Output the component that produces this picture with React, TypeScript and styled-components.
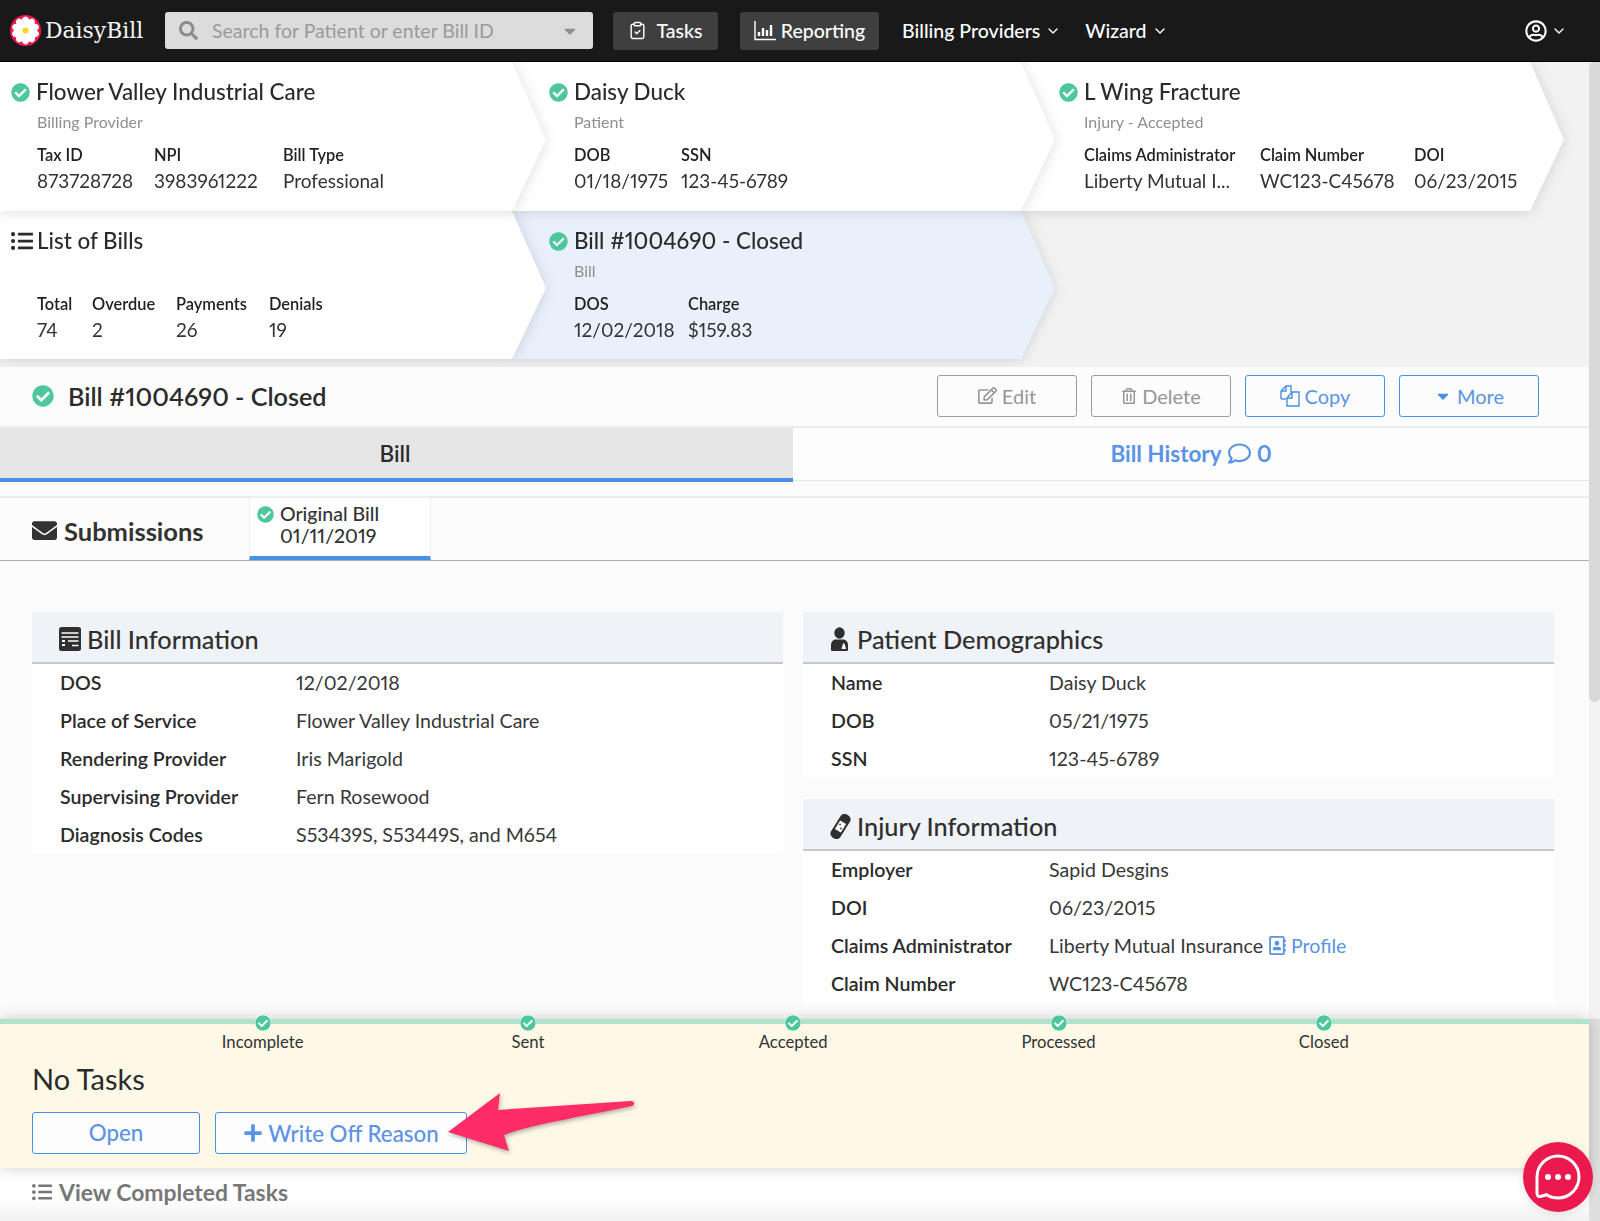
import React from "react";
import styled, { createGlobalStyle } from "styled-components";
import {
  FaCheckCircle, FaSearch, FaCaretDown, FaListUl, FaEnvelope, FaRegEdit, FaRegTrashAlt,
  FaRegComment, FaPlus, FaRegUserCircle, FaRegAddressBook,
} from "react-icons/fa";
import { ClipboardCheck, ChevronDown } from "lucide-react";

const FONT = `"Lato", "Open Sans", "Liberation Sans", sans-serif`;
const BLUE = "#4a90e2";
const LINK = "#5a93e6";
const INK = "#2b2b2b";
const GREEN = "#4fc79c";

const Global = createGlobalStyle`
  html, body { margin: 0; padding: 0; background: #fbfbfb; }
  body { font-family: ${FONT}; color: ${INK}; font-variant-numeric: proportional-nums; }
  * { box-sizing: border-box; }
`;

const Page = styled.div`
  position: relative;
  width: 1600px;
  height: 1221px;
  overflow: hidden;
  display: flex;
  flex-direction: column;
`;

/* ---------- top navigation ---------- */
const Nav = styled.nav`
  height: 62px;
  flex: none;
  display: flex;
  align-items: center;
  padding: 0 33px 0 10px;
  background: #191919;
  border-bottom: 1px solid #000;
`;
const LogoLink = styled.div`
  display: flex;
  align-items: center;
  gap: 4px;
  width: 155px;
  flex: none;
`;
const LogoText = styled.span`
  font-family: "DejaVu Serif", "Liberation Serif", serif;
  font-size: 21.9px;
  color: #f4f4f4;
`;
const SearchBox = styled.div`
  width: 428px;
  height: 37px;
  flex: none;
  display: flex;
  align-items: center;
  padding: 0 14px;
  background: #dcdcdc;
  border-radius: 3px;
  color: #8f8f8f;
  svg:first-child { font-size: 19px; color: #8c8c8c; }
`;
const SearchPlaceholder = styled.span`
  flex: 1;
  margin-left: 14px;
  font-size: 19.5px;
  color: #9a9a9a;
`;
const NavButton = styled.div<{ $w: number; $gap: number; $ml: number }>`
  width: ${(p) => p.$w}px;
  height: 38px;
  margin-left: ${(p) => p.$ml}px;
  flex: none;
  display: flex;
  align-items: center;
  justify-content: center;
  gap: ${(p) => p.$gap}px;
  background: #3f3f3f;
  border-radius: 3px;
  color: #fff;
  font-size: 19.5px;
  font-weight: 500;
`;
const NavLink = styled.div<{ $ml: number }>`
  margin-left: ${(p) => p.$ml}px;
  display: flex;
  align-items: center;
  gap: 5px;
  color: #fff;
  font-size: 19.5px;
  font-weight: 500;
`;
const UserMenu = styled.div`
  margin-left: auto;
  display: flex;
  align-items: center;
  gap: 4px;
  color: #fff;
  font-size: 22px;
`;

/* ---------- body / scrollbar ---------- */
const Body = styled.div`
  flex: 1;
  min-height: 0;
  display: flex;
`;
const Main = styled.div`
  width: 1589px;
  flex: none;
  display: flex;
  flex-direction: column;
`;
const ScrollTrack = styled.div`
  width: 11px;
  flex: none;
  display: flex;
  flex-direction: column;
  justify-content: space-between;
  background: #f3f3f3;
`;
const ScrollThumb = styled.div`
  height: 640px;
  background: #d9d9d9;
  border-radius: 5px 0 5px 5px;
`;
const ScrollFoot = styled.div`
  height: 202px;
  background: #dfdfdf;
`;

/* ---------- chevron breadcrumbs ---------- */
const Crumbs = styled.section`
  height: 305px;
  flex: none;
  overflow: hidden;
  background: #f2f2f2;
`;
const CrumbRow = styled.div<{ $z: number; $h: number }>`
  position: relative;
  z-index: ${(p) => p.$z};
  height: ${(p) => p.$h}px;
  display: flex;
`;
const CrumbShadow = styled.div<{ $z: number; $w: number; $first?: boolean }>`
  position: relative;
  z-index: ${(p) => p.$z};
  width: ${(p) => p.$w}px;
  flex: none;
  margin-left: ${(p) => (p.$first ? 0 : -33)}px;
  filter: drop-shadow(0 1px 7px rgba(0, 0, 0, 0.13));
`;
const CrumbBody = styled.div<{ $blue?: boolean; $pl: number }>`
  height: 100%;
  padding: 18px 0 0 ${(p) => p.$pl}px;
  background: ${(p) => (p.$blue ? "#e8f0fb" : "#fff")};
  clip-path: polygon(0 0, calc(100% - 34px) 0, 100% 52%, calc(100% - 34px) 100%, 0 100%);
`;
const CrumbTitle = styled.div<{ $indent: number }>`
  height: 24px;
  display: flex;
  align-items: center;
  gap: 6px;
  margin-left: ${(p) => p.$indent}px;
  font-size: 22.4px;
  font-weight: 500;
  line-height: 24px;
  color: ${INK};
  white-space: nowrap;
`;
const CheckMark = styled(FaCheckCircle)<{ $size: number }>`
  flex: none;
  width: ${(p) => p.$size}px;
  height: ${(p) => p.$size}px;
  color: ${GREEN};
`;
const ListMark = styled(FaListUl)`
  flex: none;
  width: 22px;
  height: 22px;
  margin-right: -2px;
`;
const CrumbSub = styled.div`
  height: 20px;
  margin-top: 8px;
  font-size: 16px;
  line-height: 20px;
  color: #8f8f8f;
`;
const MetaGrid = styled.div<{ $cols: string }>`
  display: grid;
  grid-template-columns: ${(p) => p.$cols};
  margin-top: 14px;
`;
const MetaLabel = styled.div`
  height: 18px;
  font-size: 16.4px;
  font-weight: 600;
  line-height: 18px;
  color: #222;
  white-space: nowrap;
`;
const MetaValue = styled.div`
  height: 22px;
  margin-top: 6px;
  font-size: 19px;
  line-height: 22px;
  color: #333;
  white-space: nowrap;
`;

/* ---------- bill heading ---------- */
const BillHead = styled.header`
  height: 59px;
  flex: none;
  display: flex;
  align-items: center;
  padding: 0 50px 2px 32px;
  background: #fcfcfc;
`;
const BillTitle = styled.h1`
  margin: 0 0 0 14px;
  flex: 1;
  font-size: 25.2px;
  font-weight: 600;
  color: ${INK};
`;
const ActionRow = styled.div`
  display: flex;
  gap: 14px;
`;
const ActionButton = styled.button<{ $muted?: boolean }>`
  width: 140px;
  height: 42px;
  display: flex;
  align-items: center;
  justify-content: center;
  gap: 5px;
  padding: 0;
  font-family: ${FONT};
  font-size: 20px;
  background: transparent;
  border: 1px solid ${(p) => (p.$muted ? "#9b9b9b" : BLUE)};
  border-radius: 3px;
  color: ${(p) => (p.$muted ? "#969696" : LINK)};
`;

/* ---------- tabs ---------- */
const TabBar = styled.div`
  height: 55px;
  flex: none;
  display: flex;
  border-top: 2px solid #ececec;
  border-bottom: 1px solid #e6e6e6;
  background: #fdfdfd;
`;
const ActiveTab = styled.div`
  width: 793px;
  flex: none;
  height: 54px;
  display: flex;
  align-items: center;
  justify-content: center;
  padding-right: 3px;
  font-size: 22.5px;
  font-weight: 600;
  color: ${INK};
  background: #e6e6e6;
  border-bottom: 4px solid ${BLUE};
`;
const LinkTab = styled.div`
  flex: 1;
  height: 51px;
  display: flex;
  align-items: center;
  justify-content: center;
  gap: 6px;
  font-size: 22.5px;
  font-weight: 700;
  color: ${LINK};
`;
const SubmissionBar = styled.div`
  height: 65px;
  margin-top: 15px;
  flex: none;
  display: flex;
  background: #fcfcfc;
  border-top: 2px solid #eeeeee;
  border-bottom: 1px solid #adadad;
`;
const SubmissionTitle = styled.div`
  width: 249px;
  flex: none;
  display: flex;
  align-items: center;
  gap: 7px;
  padding: 3px 0 0 32px;
  font-size: 25.500px;
  font-weight: 700;
  color: #333;
`;
const SubmissionTab = styled.div`
  width: 182px;
  flex: none;
  display: grid;
  grid-template-columns: 17px 1fr;
  column-gap: 6px;
  align-content: start;
  padding: 5px 0 0 7px;
  background: #fff;
  border: 1px solid #eeeeee;
  border-width: 0 1px;
  border-bottom: 4px solid ${BLUE};
  font-size: 19.5px;
  font-weight: 500;
  line-height: 22px;
  color: #333;
  svg { align-self: center; }
`;
const SubDate = styled.span`
  grid-column: 2;
`;

/* ---------- information sections ---------- */
const Columns = styled.div`
  flex: none;
  height: 458px;
  display: grid;
  grid-template-columns: 751px 751px;
  column-gap: 20px;
  align-items: start;
  padding: 51px 35px 0 32px;
  background: #fbfbfb;
`;
const Stack = styled.div`
  display: flex;
  flex-direction: column;
  gap: 21px;
`;
const Section = styled.section`
  background: #fff;
`;
const SectionHead = styled.h2<{ $gap: number }>`
  height: 52px;
  margin: 0;
  display: flex;
  align-items: center;
  gap: ${(p) => p.$gap}px;
  padding: 4px 0 0 27px;
  font-size: 25.3px;
  font-weight: 500;
  color: #2f2f2f;
  background: #eff2f7;
  border-bottom: 2px solid #c6c8cc;
`;
const InfoRow = styled.div<{ $label: number }>`
  height: 38px;
  display: grid;
  grid-template-columns: ${(p) => p.$label}px 1fr;
  align-items: center;
  padding: 0 0 2px 28px;
  font-size: 19.6px;
`;
const InfoLabel = styled.span`
  font-weight: 600;
  color: #2b2b2b;
`;
const InfoValue = styled.span`
  display: flex;
  align-items: center;
  gap: 5px;
  color: #383838;
`;
const ProfileLink = styled.span`
  display: inline-flex;
  align-items: center;
  gap: 4px;
  color: ${LINK};
`;

/* ---------- task panel ---------- */
const TaskPanel = styled.section`
  position: relative;
  z-index: 2;
  height: 149px;
  flex: none;
  background: #fef9e6;
  box-shadow: 0 0 14px rgba(0, 0, 0, 0.2);
  padding-left: 32px;
`;
const ProgressLine = styled.div`
  height: 5px;
  margin-left: -32px;
  background: #b0e2cc;
`;
const Steps = styled.div`
  display: flex;
  margin: -9px 0 0 98px;
`;
const Step = styled.div`
  width: 265.3px;
  display: flex;
  flex-direction: column;
  align-items: center;
  font-size: 16.7px;
  line-height: 18px;
  color: #333;
`;
const StepDot = styled(FaCheckCircle)`
  width: 16px;
  height: 16px;
  margin-bottom: 2px;
  color: ${GREEN};
  background: #fff;
  border-radius: 50%;
`;
const PanelTitle = styled.div`
  height: 30px;
  margin-top: 13px;
  font-size: 29px;
  line-height: 30px;
  color: #2b2b2b;
`;
const PanelButtons = styled.div`
  display: flex;
  gap: 15px;
  margin-top: 18px;
`;
const PanelButton = styled.button<{ $w: number; $lift?: boolean }>`
  width: ${(p) => p.$w}px;
  height: 42px;
  display: flex;
  align-items: center;
  justify-content: center;
  gap: 5px;
  padding: 0 0 ${(p) => (p.$lift ? 2 : 0)}px;
  font-family: ${FONT};
  font-size: 22.3px;
  font-weight: 500;
  color: ${LINK};
  background: #fdfdfd;
  border: 1px solid ${BLUE};
  border-radius: 3px;
`;
const Completed = styled.div`
  flex: 1;
  display: flex;
  align-items: flex-start;
  gap: 7px;
  padding: 12px 0 0 32px;
  font-size: 22.9px;
  line-height: 24px;
  font-weight: 700;
  color: #777;
  background: linear-gradient(#ffffff 55%, #f2f2f2);
  svg { margin-top: 2px; }
`;

/* ---------- overlays ---------- */
const ArrowMark = styled.svg`
  position: absolute;
  left: 440px;
  top: 1085px;
  z-index: 4;
  filter: drop-shadow(1px 2px 2px rgba(0, 0, 0, 0.3));
`;
const ChatBubble = styled.div`
  position: absolute;
  left: 1523px;
  top: 1142px;
  z-index: 5;
  width: 70px;
  height: 70px;
  border-radius: 50%;
  background: #ea1a4f;
  box-shadow: 0 2px 8px rgba(0, 0, 0, 0.1);
`;

/* ---------- drawings ---------- */
const Logo = () => (
  <svg width="31" height="31" viewBox="0 0 31 31">
    <circle cx="15.500" cy="15.500" r="15.500" fill="#e8194f" />
    {Array.from({ length: 10 }, (_, i) => (
      <ellipse key={i} cx="15.500" cy="7.500" rx="4" ry="6" fill="#fff" transform={`rotate(${i * 36} 15.5 15.5)`} />
    ))}
    <circle cx="15.500" cy="15.500" r="3" fill="#f7d414" />
  </svg>
);
const ReportIcon = () => (
  <svg width="22" height="20" viewBox="0 0 22 20" fill="none" stroke="#fff">
    <path d="M1 0v18.500h21" strokeWidth="1.4" />
    <path d="M5 15v-4M9 15V7M13 15V9M17 15V4" strokeWidth="2.4" />
  </svg>
);
const CopyIcon = () => (
  <svg width="20" height="22" viewBox="0 0 20 22" fill="none" stroke={BLUE} strokeWidth="1.4">
    <path d="M1 14V6l5-5h5v6" />
    <path d="M1 6h5V1" />
    <path d="M1 14h5" />
    <path d="M7 13l5-6h7v14H7z" fill="#fff" />
    <path d="M7 13h5V7" />
  </svg>
);
const BillInfoIcon = () => (
  <svg width="22" height="24" viewBox="0 0 22 24">
    <rect width="22" height="24" rx="2.500" fill="#2f2f2f" />
    <path d="M2.500 6h17M2.500 10h17M9 14h10.500M13 18.500h6.500" stroke="#fff" strokeWidth="1.700" />
    <path d="M3 14h3M3 18h3" stroke="#fff" strokeWidth="2" />
  </svg>
);
const PatientIcon = () => (
  <svg width="19" height="24" viewBox="0 0 19 24">
    <ellipse cx="9.500" cy="6" rx="5.200" ry="5.800" fill="#2f2f2f" />
    <path d="M1 23v-5c0-3.500 2.500-5.500 5-5.500h7c2.500 0 5 2 5 5.500v5a1 1 0 0 1-1 1H2a1 1 0 0 1-1-1z" fill="#2f2f2f" />
    <path d="M11.500 22l1.500-5.500 1.500 0 1.500 5.500z" fill="#fff" />
  </svg>
);
const BandAidIcon = () => (
  <svg width="21" height="25" viewBox="0 0 21 25">
    <g transform="rotate(32 10.500 12.500)">
      <rect x="5" y="-1" width="11" height="27" rx="4.500" fill="#2f2f2f" />
      <rect x="7" y="7.500" width="7" height="10" fill="#fff" />
      <circle cx="9" cy="11" r="0.900" fill="#2f2f2f" />
      <circle cx="12" cy="14" r="0.900" fill="#2f2f2f" />
    </g>
  </svg>
);
const ChatIcon = () => (
  <svg width="70" height="70" viewBox="0 0 70 70" fill="none">
    <path d="M14 35a21 21 0 1 1 21 21c-4.500 0-8.500-1.300-11.500-3.300l-5.500 1.600c-2.500.7-4-.6-4-3z" stroke="#fff" strokeWidth="3" />
    <circle cx="25" cy="35" r="3" fill="#fff" />
    <circle cx="35" cy="35" r="3" fill="#fff" />
    <circle cx="45" cy="35" r="3" fill="#fff" />
  </svg>
);
const Arrow = () => (
  <ArrowMark width="200" height="72" viewBox="0 0 200 72">
    <path
      d="M8 47 L60 8 L58 25 L191 16 C195 16 195 20 192 21 C140 32 90 40 64 50 L69 66 Z"
      fill="#ff2d67"
    />
  </ArrowMark>
);

/* ---------- data ---------- */
type Meta = [string, string];
const Crumb = ({
  z, w, first, blue, pl, indent, icon, title, sub, cols, meta,
}: {
  z: number; w: number; first?: boolean; blue?: boolean; pl: number; indent: number;
  icon?: React.ReactNode; title: string; sub: string; cols: string; meta: Meta[];
}) => (
  <CrumbShadow $z={z} $w={w} $first={first}>
    <CrumbBody $blue={blue} $pl={pl}>
      <CrumbTitle $indent={indent}>
        {icon ?? <CheckMark $size={19} />}
        {title}
      </CrumbTitle>
      <CrumbSub>{sub}</CrumbSub>
      <MetaGrid $cols={cols}>
        {meta.map(([l, v]) => (
          <div key={l}>
            <MetaLabel>{l}</MetaLabel>
            <MetaValue>{v}</MetaValue>
          </div>
        ))}
      </MetaGrid>
    </CrumbBody>
  </CrumbShadow>
);

const info = (rows: Meta[], label: number) =>
  rows.map(([l, v]) => (
    <InfoRow key={l} $label={label}>
      <InfoLabel>{l}</InfoLabel>
      <InfoValue>{v}</InfoValue>
    </InfoRow>
  ));

export default function App() {
  return (
    <Page>
      <Global />
      <Nav>
        <LogoLink>
          <Logo />
          <LogoText>DaisyBill</LogoText>
        </LogoLink>
        <SearchBox>
          <FaSearch />
          <SearchPlaceholder>Search for Patient or enter Bill ID</SearchPlaceholder>
          <FaCaretDown size={18} />
        </SearchBox>
        <NavButton $w={105} $gap={9} $ml={20}>
          <ClipboardCheck size={19} strokeWidth={1.8} />
          Tasks
        </NavButton>
        <NavButton $w={139} $gap={5} $ml={22}>
          <ReportIcon />
          Reporting
        </NavButton>
        <NavLink $ml={23}>
          Billing Providers
          <ChevronDown size={16} />
        </NavLink>
        <NavLink $ml={24}>
          Wizard
          <ChevronDown size={16} />
        </NavLink>
        <UserMenu>
          <FaRegUserCircle />
          <ChevronDown size={16} />
        </UserMenu>
      </Nav>
      <Body>
        <Main>
          <Crumbs>
            <CrumbRow $z={2} $h={149}>
              <Crumb z={3} w={546} first pl={37} indent={-26} title="Flower Valley Industrial Care" sub="Billing Provider"
                cols="117px 129px auto"
                meta={[["Tax ID", "873728728"], ["NPI", "3983961222"], ["Bill Type", "Professional"]]} />
              <Crumb z={2} w={542} pl={61} indent={-25} title="Daisy Duck" sub="Patient"
                cols="107px auto"
                meta={[["DOB", "01/18/1975"], ["SSN", "123-45-6789"]]} />
              <Crumb z={1} w={542} pl={62} indent={-25} title="L Wing Fracture" sub="Injury - Accepted"
                cols="176px 154px auto"
                meta={[["Claims Administrator", "Liberty Mutual I..."], ["Claim Number", "WC123-C45678"], ["DOI", "06/23/2015"]]} />
            </CrumbRow>
            <CrumbRow $z={1} $h={148}>
              <Crumb z={3} w={546} first pl={37} indent={-26} icon={<ListMark />} title="List of Bills" sub=""
                cols="55px 84px 93px auto"
                meta={[["Total", "74"], ["Overdue", "2"], ["Payments", "26"], ["Denials", "19"]]} />
              <Crumb z={2} w={542} blue pl={61} indent={-25} title="Bill #1004690 - Closed" sub="Bill"
                cols="114px auto"
                meta={[["DOS", "12/02/2018"], ["Charge", "$159.83"]]} />
            </CrumbRow>
          </Crumbs>

          <BillHead>
            <CheckMark $size={22} />
            <BillTitle>Bill #1004690 - Closed</BillTitle>
            <ActionRow>
              <ActionButton $muted><FaRegEdit size={19} />Edit</ActionButton>
              <ActionButton $muted><FaRegTrashAlt size={16} />Delete</ActionButton>
              <ActionButton><CopyIcon />Copy</ActionButton>
              <ActionButton><FaCaretDown size={18} color={BLUE} />More</ActionButton>
            </ActionRow>
          </BillHead>

          <TabBar>
            <ActiveTab>Bill</ActiveTab>
            <LinkTab>Bill History <FaRegComment size={23} /> 0</LinkTab>
          </TabBar>

          <SubmissionBar>
            <SubmissionTitle><FaEnvelope size={25} />Submissions</SubmissionTitle>
            <SubmissionTab>
              <CheckMark $size={17} />
              <span>Original Bill</span>
              <SubDate>01/11/2019</SubDate>
            </SubmissionTab>
          </SubmissionBar>

          <Columns>
            <Section>
              <SectionHead $gap={6}><BillInfoIcon />Bill Information</SectionHead>
              {info([
                ["DOS", "12/02/2018"],
                ["Place of Service", "Flower Valley Industrial Care"],
                ["Rendering Provider", "Iris Marigold"],
                ["Supervising Provider", "Fern Rosewood"],
                ["Diagnosis Codes", "S53439S, S53449S, and M654"],
              ], 236)}
            </Section>
            <Stack>
              <Section>
                <SectionHead $gap={8}><PatientIcon />Patient Demographics</SectionHead>
                {info([["Name", "Daisy Duck"], ["DOB", "05/21/1975"], ["SSN", "123-45-6789"]], 218)}
              </Section>
              <Section>
                <SectionHead $gap={6}><BandAidIcon />Injury Information</SectionHead>
                {info([["Employer", "Sapid Desgins"], ["DOI", "06/23/2015"]], 218)}
                <InfoRow $label={218}>
                  <InfoLabel>Claims Administrator</InfoLabel>
                  <InfoValue>
                    Liberty Mutual Insurance
                    <ProfileLink><FaRegAddressBook size={19} />Profile</ProfileLink>
                  </InfoValue>
                </InfoRow>
                {info([["Claim Number", "WC123-C45678"]], 218)}
              </Section>
            </Stack>
          </Columns>

          <TaskPanel>
            <ProgressLine />
            <Steps>
              {["Incomplete", "Sent", "Accepted", "Processed", "Closed"].map((s) => (
                <Step key={s}><StepDot />{s}</Step>
              ))}
            </Steps>
            <PanelTitle>No Tasks</PanelTitle>
            <PanelButtons>
              <PanelButton $w={168} $lift>Open</PanelButton>
              <PanelButton $w={252}><FaPlus size={20} />Write Off Reason</PanelButton>
            </PanelButtons>
          </TaskPanel>
          <Completed><FaListUl size={20} />View Completed Tasks</Completed>
        </Main>
        <ScrollTrack>
          <ScrollThumb />
          <ScrollFoot />
        </ScrollTrack>
      </Body>
      <Arrow />
      <ChatBubble><ChatIcon /></ChatBubble>
    </Page>
  );
}
